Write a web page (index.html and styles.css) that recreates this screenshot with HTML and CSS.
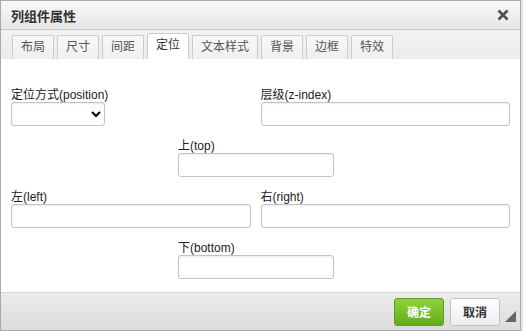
FILE: index.html
```html
<!DOCTYPE html>
<html lang="zh-CN">
<head>
    <meta charset="UTF-8">
    <title>列组件属性</title>
    <link rel="stylesheet" href="styles.css">
</head>
<body>
    <div class="dialog">
        <div class="dialog-title">
            <span>列组件属性</span>
            <svg class="close" width="12" height="12" viewBox="0 0 12 12">
                <path d="M1.5 1.5 L10.5 10.5 M10.5 1.5 L1.5 10.5" stroke="#505050" stroke-width="2.6" fill="none"/>
            </svg>
        </div>
        <div class="tabs">
            <div class="tab">布局</div>
            <div class="tab">尺寸</div>
            <div class="tab">间距</div>
            <div class="tab active">定位</div>
            <div class="tab">文本样式</div>
            <div class="tab">背景</div>
            <div class="tab">边框</div>
            <div class="tab">特效</div>
        </div>
        <div class="dialog-body">
            <div class="row">
                <div class="field left">
                    <label>定位方式(position)</label>
                    <select class="select"><option></option></select>
                </div>
                <div class="field right">
                    <label>层级(z-index)</label>
                    <input type="text">
                </div>
            </div>
            <div class="row">
                <div class="field center">
                    <label>上(top)</label>
                    <input type="text">
                </div>
            </div>
            <div class="row">
                <div class="field left">
                    <label>左(left)</label>
                    <input type="text">
                </div>
                <div class="field right">
                    <label>右(right)</label>
                    <input type="text">
                </div>
            </div>
            <div class="row">
                <div class="field center">
                    <label>下(bottom)</label>
                    <input type="text">
                </div>
            </div>
        </div>
        <div class="dialog-footer">
            <button class="btn btn-ok">确定</button>
            <button class="btn">取消</button>
            <span class="grip"></span>
        </div>
    </div>
</body>
</html>
```

FILE: styles.css
```css
body {
    margin: 0;
    background-color: #dfe6ee;
    font-family: "Liberation Sans", Arial, "Noto Sans CJK SC", sans-serif;
    font-size: 12px;
    color: #333;
}
.dialog {
    width: 519px;
    height: 329px;
    border: 1px solid #a9a9a9;
    background-color: white;
    display: flex;
    flex-direction: column;
}
.dialog-title {
    height: 31px;
    background: linear-gradient(#f8f8f8, #e6e6e6);
    border-bottom: 1px solid #c6c6c6;
    display: flex;
    align-items: center;
    justify-content: space-between;
    padding: 0 10px 0 10px;
    font-size: 13px;
    font-weight: bold;
    color: #333;
}
.close {
    display: block;
    margin-right: 1px;
}
.tabs {
    height: 24px;
    padding: 4px 0 0 11px;
    background: linear-gradient(#f2f2f2, #ececec);
    display: flex;
    gap: 3px;
    border-bottom: 1px solid #ececec;
}
.tab {
    padding: 0 8px;
    height: 23px;
    line-height: 23px;
    margin-top: 1px;
    border: 1px solid #ccc;
    border-bottom: none;
    border-radius: 2px 2px 0 0;
    background: linear-gradient(#f8f8f8, #efefef);
    color: #555;
    font-size: 12px;
}
.tab.active {
    background: white;
    height: 25px;
    margin-top: -1px;
    margin-bottom: -1px;
    color: #333;
}
.dialog-body {
    flex: 1;
    padding: 29px 10px 0 10px;
}
.row {
    display: flex;
    gap: 10px;
    margin-bottom: 13px;
}
.field label {
    display: block;
    height: 14px;
    line-height: 14px;
    color: #222;
}
.field.left {
    width: 240px;
}
.field.right {
    width: 250px;
}
.field.center {
    width: 156px;
    margin-left: 167px;
}
input, .select {
    width: 100%;
    height: 24px;
    border: 1px solid #c3c3c3;
    border-radius: 3px;
    box-sizing: border-box;
    box-shadow: inset 0 1px 2px rgba(0, 0, 0, 0.08);
    background: white;
    margin: 0;
}
.select {
    width: 94px;
}
.dialog-footer {
    height: 40px;
    border-top: 1px solid #d4d4d4;
    background: linear-gradient(#ececec, #dcdcdc);
    display: flex;
    align-items: center;
    justify-content: flex-end;
    gap: 6px;
    padding-right: 20px;
    position: relative;
}
.btn {
    width: 50px;
    height: 28px;
    border: 1px solid #c4c4c4;
    border-radius: 3px;
    background: linear-gradient(#ffffff, #ededed);
    font-family: "Liberation Sans", "Noto Sans CJK SC", sans-serif;
    font-size: 12px;
    font-weight: bold;
    color: #333;
    cursor: pointer;
}
.btn-ok {
    background: linear-gradient(#8fd23a, #5fae1c);
    border-color: #5b9f1e;
    color: white;
}
.grip {
    position: absolute;
    right: 4px;
    bottom: 8px;
    width: 0;
    height: 0;
    border-left: 11px solid transparent;
    border-bottom: 11px solid #666;
}
```
